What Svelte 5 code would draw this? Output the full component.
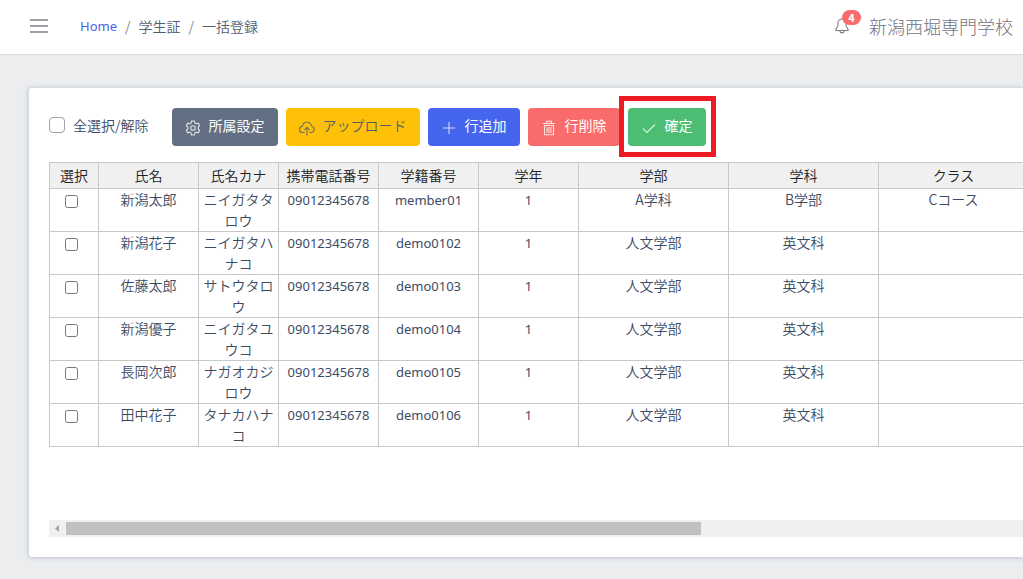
<script>
  const columns = [
    { label: '選択', width: 49 },
    { label: '氏名', width: 100 },
    { label: '氏名カナ', width: 80 },
    { label: '携帯電話番号', width: 100 },
    { label: '学籍番号', width: 100 },
    { label: '学年', width: 100 },
    { label: '学部', width: 150 },
    { label: '学科', width: 150 },
    { label: 'クラス', width: 150 }
  ];

  let rows = $state([
    { name: '新潟太郎', kana: 'ニイガタタロウ', phone: '09012345678', code: 'member01', year: 1, faculty: 'A学科', dept: 'B学部', course: 'Cコース', checked: false },
    { name: '新潟花子', kana: 'ニイガタハナコ', phone: '09012345678', code: 'demo0102', year: 1, faculty: '人文学部', dept: '英文科', course: '', checked: false },
    { name: '佐藤太郎', kana: 'サトウタロウ', phone: '09012345678', code: 'demo0103', year: 1, faculty: '人文学部', dept: '英文科', course: '', checked: false },
    { name: '新潟優子', kana: 'ニイガタユウコ', phone: '09012345678', code: 'demo0104', year: 1, faculty: '人文学部', dept: '英文科', course: '', checked: false },
    { name: '長岡次郎', kana: 'ナガオカジロウ', phone: '09012345678', code: 'demo0105', year: 1, faculty: '人文学部', dept: '英文科', course: '', checked: false },
    { name: '田中花子', kana: 'タナカハナコ', phone: '09012345678', code: 'demo0106', year: 1, faculty: '人文学部', dept: '英文科', course: '', checked: false }
  ]);

  function toggleAll(e) {
    for (const row of rows) row.checked = e.target.checked;
  }

  function addRow() {
    rows.push({ name: '', kana: '', phone: '', code: '', year: '', faculty: '', dept: '', course: '', checked: false });
  }

  function deleteRows() {
    rows = rows.filter((row) => !row.checked);
  }
</script>

<div class="app">
  <header class="header">
    <button class="toggler" aria-label="メニュー">
      <svg width="18" height="16" viewBox="0 0 18 16">
        <path d="M0 2h18M0 8h18M0 14h18" stroke="currentColor" stroke-width="1.6" />
      </svg>
    </button>
    <nav class="breadcrumb">
      <a class="latin" href="#home">Home</a>
      <span class="slash">/</span>
      <span>学生証</span>
      <span class="slash">/</span>
      <span>一括登録</span>
    </nav>
    <button class="bell" aria-label="通知">
      <svg width="14" height="16" viewBox="0 0 14 16" fill="none" stroke="currentColor" stroke-width="1.1">
        <path d="M7 1C4.4 1 2.9 3 2.9 5.3v2.6L.9 11.4v1.1h12.2v-1.1l-2-3.5V5.3C11.1 3 9.6 1 7 1z" />
        <path d="M4.8 12.6a2.2 2.3 0 0 0 4.4 0" />
      </svg>
      <span class="badge">4</span>
    </button>
    <span class="school">新潟西堀専門学校</span>
  </header>

  <main>
    <section class="card">
      <div class="toolbar">
        <label class="check-all">
          <input type="checkbox" onchange={toggleAll} />
          <span>全選択/解除</span>
        </label>
        <button class="btn secondary">
          <svg class="icon" viewBox="0 0 16 16">
            <path d="M6.6 1h2.8l.5 2 1.4.8 2-.6 1.4 2.4-1.5 1.5v1.8l1.5 1.5-1.4 2.4-2-.6-1.4.8-.5 2H6.6l-.5-2-1.4-.8-2 .6-1.4-2.4 1.5-1.5V7.1L1.3 5.6l1.4-2.4 2 .6 1.4-.8z" />
            <circle cx="8" cy="8" r="2.3" />
          </svg>
          所属設定
        </button>
        <button class="btn warning">
          <svg class="icon" viewBox="0 0 16 16">
            <path d="M5.5 12.5H3.7A3.1 3.1 0 0 1 3.5 6.3 4.5 4.5 0 0 1 12.4 6a3.3 3.3 0 0 1 .1 6.5h-2" />
            <path d="M8 15.5V7.5M5.2 10.2 8 7.4l2.8 2.8" />
          </svg>
          アップロード
        </button>
        <button class="btn primary" onclick={addRow}>
          <svg class="icon" viewBox="0 0 16 16">
            <path d="M8 2v12M2 8h12" />
          </svg>
          行追加
        </button>
        <button class="btn danger" onclick={deleteRows}>
          <svg class="icon" viewBox="0 0 16 16">
            <path d="M2 3.5h12M5.5 3.3V1.2h5v2.1M3.5 5.5v9.3h9V5.5zM6 7v6M8 7v6M10 7v6" />
          </svg>
          行削除
        </button>
        <div class="marked">
          <button class="btn success">
            <svg class="icon" viewBox="0 0 16 16">
              <path d="m2 8.5 4 4 8-8" />
            </svg>
            確定
          </button>
        </div>
      </div>

      <div class="grid-area">
        <table>
          <colgroup>
            {#each columns as col}
              <col style="width: {col.width}px" />
            {/each}
          </colgroup>
          <thead>
            <tr>
              {#each columns as col}
                <th>{col.label}</th>
              {/each}
            </tr>
          </thead>
          <tbody>
            {#each rows as row}
              <tr>
                <td><input type="checkbox" aria-label={row.name} bind:checked={row.checked} /></td>
                <td>{row.name}</td>
                <td>{row.kana}</td>
                <td class="latin">{row.phone}</td>
                <td class="latin">{row.code}</td>
                <td class="latin">{row.year}</td>
                <td>{row.faculty}</td>
                <td>{row.dept}</td>
                <td>{row.course}</td>
              </tr>
            {/each}
          </tbody>
        </table>
      </div>
      <div class="scrollbar">
        <svg width="17" height="17" viewBox="0 0 17 17"><path d="M6 8.5 10 5v7z" fill="#a3a3a3" /></svg>
        <div class="thumb"></div>
      </div>
    </section>
  </main>
</div>

<style>
  :global(body) {
    margin: 0;
    background: #ebedef;
  }

  .app {
    min-height: 100vh;
    overflow: hidden;
    color: #3c4b64;
    font-family: 'Noto Sans CJK JP', 'Noto Sans', sans-serif;
    font-size: 14px;
    font-weight: 350;
    line-height: 21px;
  }

  button {
    font: inherit;
    cursor: pointer;
  }

  .latin {
    font-family: 'Noto Sans', sans-serif;
    font-size: 13px;
    font-weight: 400;
  }

  .header {
    display: flex;
    align-items: center;
    box-sizing: border-box;
    height: 55px;
    padding: 0 10px 2px 30px;
    background: #fff;
    border-bottom: 1px solid #d8dbe0;
  }

  .toggler,
  .bell {
    display: flex;
    padding: 0;
    border: 0;
    background: none;
    color: #80808a;
  }

  .breadcrumb {
    display: flex;
    flex: 1;
    gap: 8px;
    margin-left: 32px;
    color: #4f5d73;
  }

  .breadcrumb a {
    color: #4665ee;
    text-decoration: none;
  }

  .slash {
    color: #768192;
  }

  .bell {
    position: relative;
    margin-right: 20px;
  }

  .badge {
    position: absolute;
    top: -8px;
    left: 7px;
    width: 19px;
    border-radius: 8px;
    background: #f96c6b;
    color: #fff;
    font-size: 11px;
    font-weight: 700;
    line-height: 15px;
    text-align: center;
  }

  .school {
    color: #73737f;
    font-size: 18px;
    font-weight: 300;
  }

  main {
    padding: 32px 0 22px 28px;
  }

  .card {
    padding: 20px 0 20px 20px;
    border: 1px solid #d8dbe0;
    border-width: 1px 0 0 1px;
    border-radius: 4px 0 0 4px;
    background: #fff;
    box-shadow: 0 1px 4px rgba(60, 75, 100, 0.25);
  }

  /* Toolbar */
  .toolbar {
    display: flex;
    align-items: center;
    gap: 8px;
    white-space: nowrap;
  }

  .check-all {
    display: flex;
    align-items: center;
    gap: 8px;
    margin-right: 15px;
    padding-bottom: 4px;
  }

  .check-all input {
    appearance: none;
    width: 16px;
    height: 16px;
    margin: 0;
    border: 1px solid #9da5b1;
    border-radius: 4px;
    background: #fff;
  }

  .check-all input:checked {
    background: #4665ee;
  }

  .btn {
    display: flex;
    align-items: center;
    gap: 8px;
    height: 38px;
    padding: 0 13px 4px;
    border: 0;
    border-radius: 4px;
    color: #fff;
    font-weight: 400;
  }

  .icon {
    width: 16px;
    height: 16px;
    margin-top: 5px;
    fill: none;
    stroke: currentColor;
    stroke-width: 1.1;
    opacity: 0.8;
  }

  .secondary {
    background: #636f83;
  }

  .warning {
    background: #ffc107;
    color: #4f5d73;
    font-weight: 350;
  }

  .primary {
    background: #4665ee;
  }

  .danger {
    background: #f96c6b;
  }

  .success {
    background: #4dbd74;
  }

  .marked {
    position: relative;
  }

  .marked::before {
    content: '';
    position: absolute;
    inset: -12px -10px -11px -9px;
    border: 5px solid #ed1c24;
    pointer-events: none;
  }

  /* Student table */
  .grid-area {
    margin-top: 16px;
    overflow: hidden;
  }

  table {
    width: 980px;
    table-layout: fixed;
    border-collapse: collapse;
  }

  th,
  td {
    padding: 0;
    border: 1px solid #c8c8c8;
    text-align: center;
    vertical-align: top;
  }

  td.latin {
    padding-top: 1px;
  }

  th {
    height: 25px;
    background: #f0f0f0;
    color: #222;
    font-weight: 350;
    vertical-align: middle;
  }

  td input {
    display: block;
    width: 13px;
    height: 13px;
    margin: 6px 0 0 15px;
  }

  .scrollbar {
    display: flex;
    align-items: center;
    height: 17px;
    margin-top: 73px;
    background: #f0f0f0;
  }

  .thumb {
    width: 65.2%;
    height: 13px;
    background: #c1c1c1;
  }
</style>
